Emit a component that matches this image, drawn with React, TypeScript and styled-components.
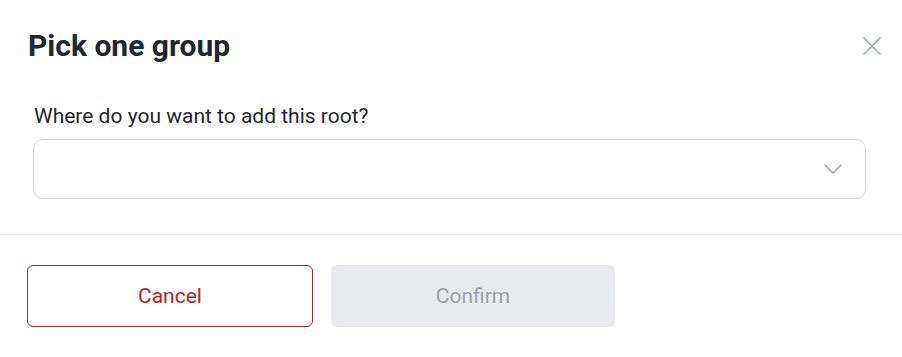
import styled, { createGlobalStyle } from "styled-components";

const GlobalStyle = createGlobalStyle`
  html, body {
    margin: 0;
    padding: 0;
    background: #ffffff;
    font-family: Roboto, "Liberation Sans", sans-serif;
  }
`;

function App() {
  return (
    <>
      <GlobalStyle />
      <Dialog>
        <Header>
          <Title>Pick one group</Title>
          <CloseButton aria-label="Close">
            <svg width="18" height="18" viewBox="0 0 18 18" fill="none">
              <path
                d="M1 1L17 17M17 1L1 17"
                stroke="#9aa1ad"
                strokeWidth="1.5"
                strokeLinecap="round"
              />
            </svg>
          </CloseButton>
        </Header>
        <Body>
          <Label>Where do you want to add this root?</Label>
          <Select>
            <svg width="18" height="10" viewBox="0 0 18 10" fill="none">
              <path
                d="M1 1L9 9L17 1"
                stroke="#9aa1ad"
                strokeWidth="1.4"
                strokeLinecap="round"
                strokeLinejoin="round"
              />
            </svg>
          </Select>
        </Body>
        <Footer>
          <Button variant="cancel" width={286}>
            Cancel
          </Button>
          <Button variant="disabled" width={284} disabled>
            Confirm
          </Button>
        </Footer>
      </Dialog>
    </>
  );
}

export default App;

const Dialog = styled.div`
  width: 902px;
  height: 357px;
  background: #ffffff;
  box-sizing: border-box;
`;

const Header = styled.div`
  display: flex;
  align-items: center;
  justify-content: space-between;
  padding: 28px 21px 0 28px;
  height: 64px;
  box-sizing: border-box;
`;

const Title = styled.h1`
  margin: 0;
  font-size: 30px;
  font-weight: 700;
  color: #1f2633;
  line-height: 36px;
`;

const CloseButton = styled.button`
  background: none;
  border: none;
  padding: 0;
  display: flex;
  cursor: pointer;
`;

const Body = styled.div`
  padding: 40px 36px 35px 33px;
  border-bottom: 1px solid #e5e7eb;
`;

const Label = styled.div`
  font-size: 21px;
  color: #1f2633;
  line-height: 24px;
  margin-left: 1px;
  margin-bottom: 11px;
`;

const Select = styled.div`
  height: 60px;
  box-sizing: border-box;
  border: 1px solid #d1d5db;
  border-radius: 10px;
  display: flex;
  align-items: center;
  justify-content: flex-end;
  padding-right: 23px;
`;

const Footer = styled.div`
  display: flex;
  gap: 18px;
  padding: 30px 27px 0 27px;
`;

const Button = styled.button<{ variant: "cancel" | "disabled"; width: number }>`
  width: ${(p) => p.width}px;
  height: 62px;
  border-radius: 6px;
  font-family: Roboto, "Liberation Sans", sans-serif;
  font-size: 21px;
  box-sizing: border-box;
  border: ${(p) => (p.variant === "cancel" ? "1px solid #b42323" : "none")};
  background: ${(p) => (p.variant === "cancel" ? "#ffffff" : "#e9eaee")};
  color: ${(p) => (p.variant === "cancel" ? "#b42323" : "#9ba1ab")};
  cursor: ${(p) => (p.variant === "cancel" ? "pointer" : "default")};
`;
